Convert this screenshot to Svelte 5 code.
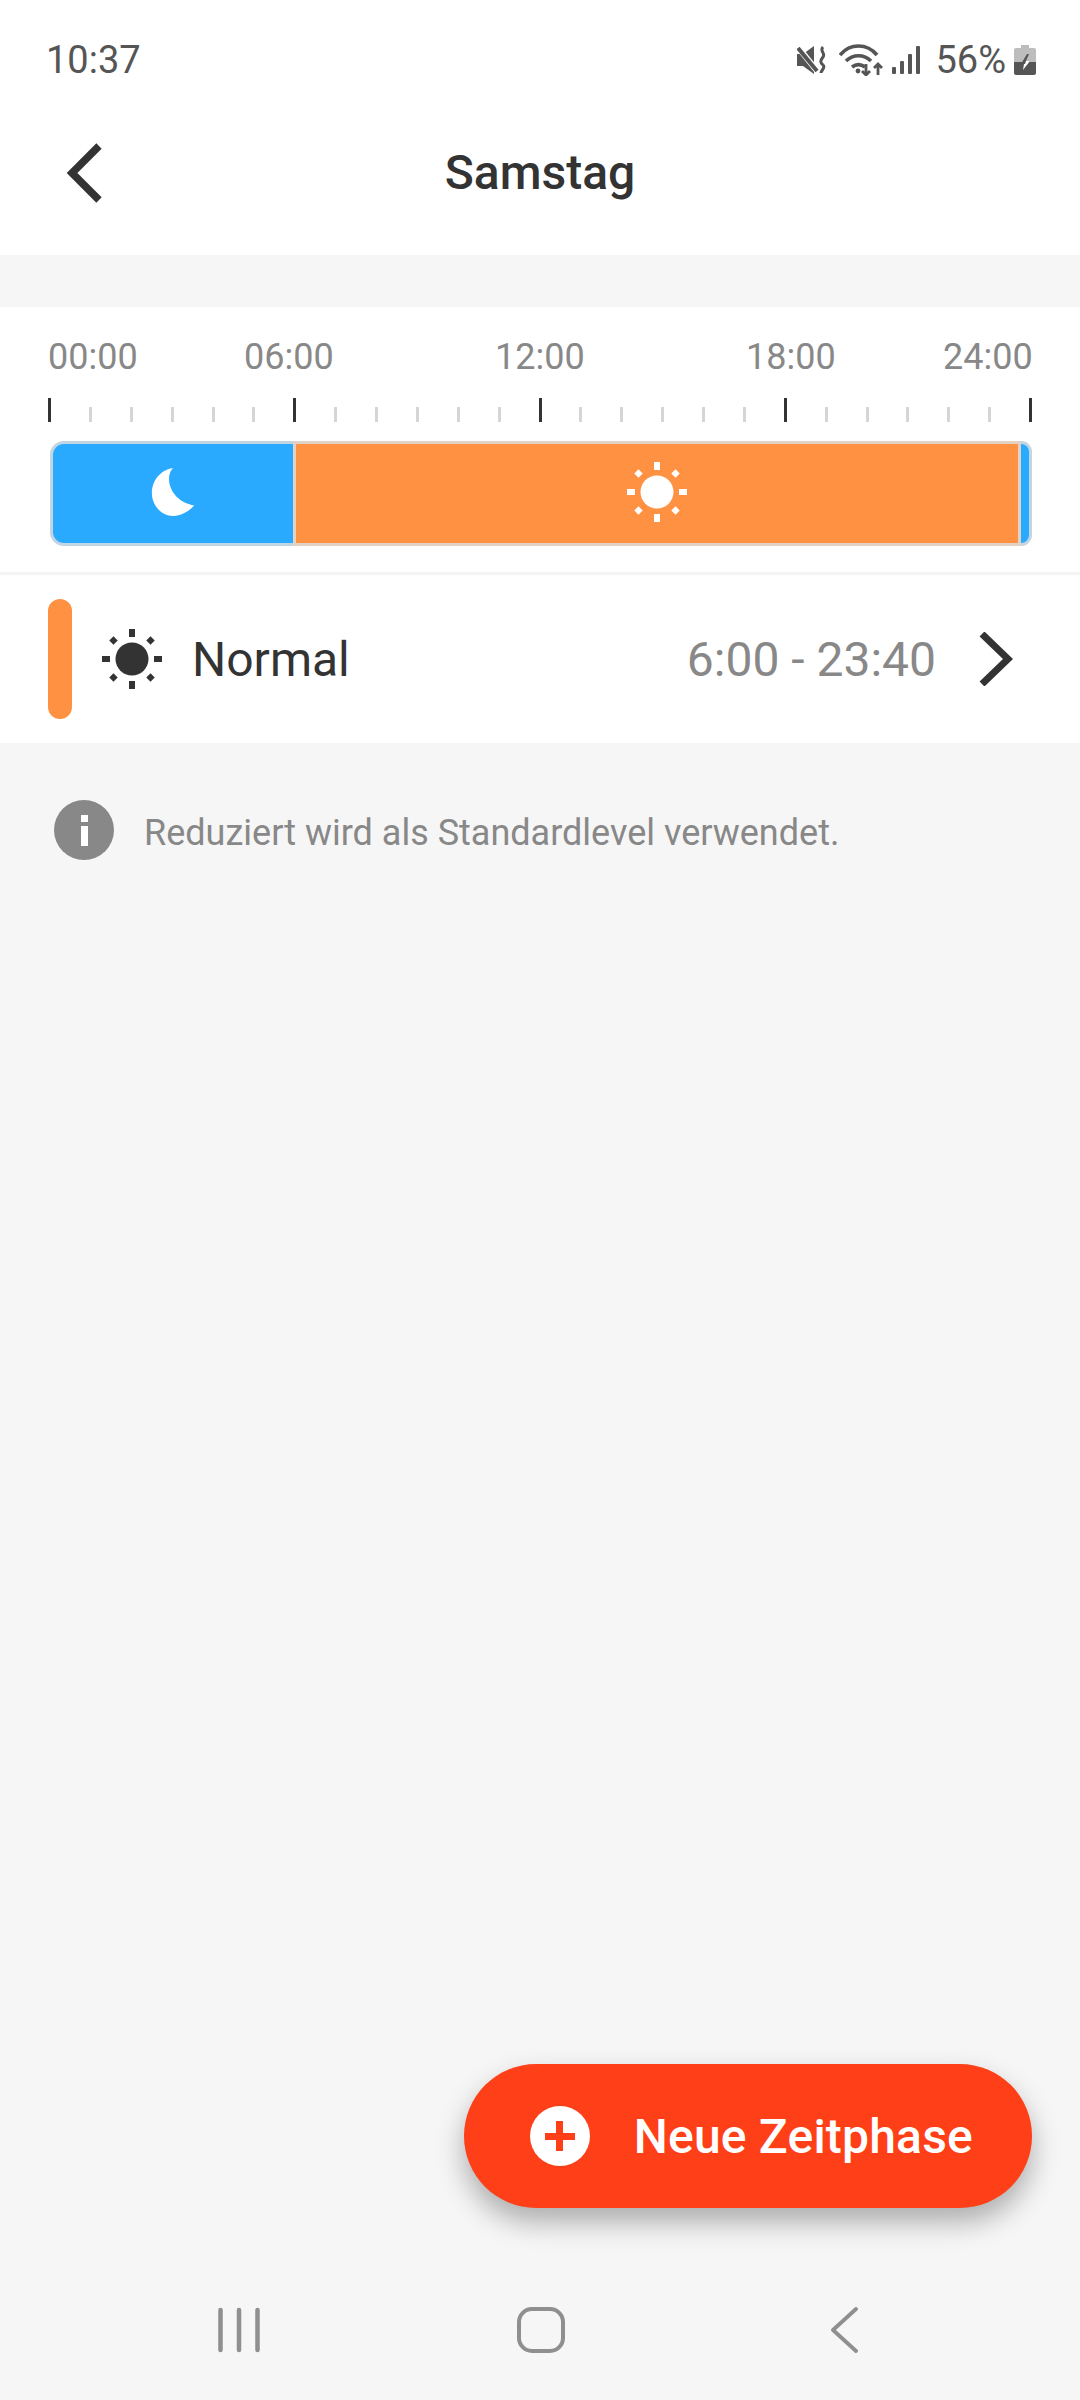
<script>
	const labels = ['00:00', '06:00', '12:00', '18:00', '24:00'];
	const ticks = Array.from({ length: 25 }, (_, i) => i % 6 === 0);
	const rays = [0, 45, 90, 135, 180, 225, 270, 315];
</script>

{#snippet sun(color)}
	<svg class="sun" viewBox="0 0 60 60" fill={color}>
		<circle cx="30" cy="30" r="16.5" />
		{#each rays as angle}
			{#if angle % 90 === 0}
				<rect x="27" y="0" width="6" height="8" transform="rotate({angle} 30 30)" />
			{:else}
				<rect x="27" y="0.8" width="6" height="6" transform="rotate({angle} 30 30)" />
			{/if}
		{/each}
	</svg>
{/snippet}

<div class="page">
	<header class="top">
		<div class="status">
			<span class="clock">10:37</span>
			<div class="status-icons">
				<svg class="ic-mute" viewBox="0 0 30 28" fill="#555">
					<path d="M0 8h6L17 0v28L6 20H0z" />
					<path d="M0 0l21 26" stroke="#fff" stroke-width="6" />
					<path d="M1 2l19 23" stroke="#555" stroke-width="4" />
					<path d="M26 1c-4 4 3 6 0 10s-3 5 0 8-2 5-2 8" fill="none" stroke="#555" stroke-width="3" />
				</svg>
				<svg class="ic-wifi" viewBox="0 0 44 32" fill="none" stroke="#555" stroke-width="3.6">
					<path d="M1 11c10-12 27-12 37 0" />
					<path d="M7 17c7-7 18-7 25 0" />
					<path d="M13 23c4-3 9-3 13 0" />
					<circle cx="19" cy="27" r="2.4" fill="#555" stroke="none" />
					<path d="M27 20v11M23 27l4 4 4-4" stroke-width="2.8" />
					<path d="M39 31V20M35 24l4-4 4 4" stroke-width="2.8" />
				</svg>
				<svg class="ic-signal" viewBox="0 0 28 28" fill="#555">
					<rect x="0" y="21" width="4" height="7" rx="1" />
					<rect x="8" y="15" width="4" height="13" rx="1" />
					<rect x="16" y="8" width="4" height="20" rx="1" />
					<rect x="24" y="0" width="4" height="28" rx="1" />
				</svg>
				<span class="percent">56%</span>
				<svg class="ic-battery" viewBox="0 0 22 30">
					<path d="M7 0h8v3h5a2 2 0 0 1 2 2v12H0V5a2 2 0 0 1 2-2h5z" fill="#bdbdbd" />
					<path d="M0 17h22v11a2 2 0 0 1-2 2H2a2 2 0 0 1-2-2z" fill="#555" />
					<path d="M13 9l-6 10h4l-2 6 7-9h-4l3-7z" fill="#555" />
					<path d="M10 19l-1 6 7-9h-4l-1 3z" fill="#fff" />
				</svg>
			</div>
		</div>
		<div class="title-bar">
			<svg class="back" viewBox="0 0 36 60" fill="none" stroke="#333" stroke-width="7.5">
				<path d="M33 3L6 30l27 27" />
			</svg>
			<h1>Samstag</h1>
		</div>
	</header>

	<main class="content">
		<section class="timeline">
			<div class="axis-labels">
				{#each labels as label}
					<span>{label}</span>
				{/each}
			</div>
			<div class="ticks">
				{#each ticks as major}
					<i class:major></i>
				{/each}
			</div>
			<div class="bar">
				<div class="seg seg-night">
					<svg class="moon" viewBox="0 0 44 50" fill="#fff">
						<path d="M22 0C13 9 18 34 44 39 37 47 28 50 22 50 10 50 0 39 0 26 0 13 9 2 22 0z" />
					</svg>
				</div>
				<div class="seg seg-day">{@render sun('#fff')}</div>
				<div class="seg seg-end"></div>
			</div>
		</section>

		<section class="phase">
			<span class="pill"></span>
			{@render sun('#333')}
			<span class="phase-name">Normal</span>
			<span class="phase-time">6:00 - 23:40</span>
			<svg class="more" viewBox="0 0 34 54" fill="none" stroke="#333" stroke-width="7">
				<path d="M3 2l26 25L3 52" />
			</svg>
		</section>

		<div class="info">
			<span class="info-icon"><b></b><b></b></span>
			<span class="info-text">Reduziert wird als Standardlevel verwendet.</span>
		</div>

		<button class="add">
			<span class="plus"></span>
			Neue Zeitphase
		</button>
	</main>

	<nav class="nav">
		<svg class="nav-recent" viewBox="0 0 42 46" fill="none" stroke="#8f8f8f" stroke-width="4.5" stroke-linecap="round">
			<path d="M2.5 3v40M21 3v40M39.5 3v40" />
		</svg>
		<svg class="nav-home" viewBox="0 0 48 46" fill="none" stroke="#8f8f8f" stroke-width="4">
			<rect x="2" y="2" width="44" height="42" rx="13" />
		</svg>
		<svg class="nav-back" viewBox="0 0 28 46" fill="none" stroke="#8f8f8f" stroke-width="3.8" stroke-linecap="round" stroke-linejoin="round">
			<path d="M26 2L3 23l23 21" />
		</svg>
	</nav>
</div>

<style>
	:global(body) {
		margin: 0;
		font-family: Roboto, 'Liberation Sans', sans-serif;
	}

	.page {
		display: flex;
		flex-direction: column;
		height: 2400px;
		background: #f6f6f6;
		overflow: hidden;
	}

	.top {
		height: 255px;
		background: #fff;
	}

	.status {
		display: flex;
		align-items: center;
		justify-content: space-between;
		height: 60px;
		padding: 30px 44px 0 46px;
		color: #555;
		font-size: 38px;
	}

	.status-icons {
		display: flex;
		align-items: center;
	}

	.ic-mute {
		width: 30px;
		height: 28px;
		margin-right: 12px;
	}

	.ic-wifi {
		width: 44px;
		height: 32px;
		margin-right: 9px;
	}

	.ic-signal {
		width: 28px;
		height: 28px;
		margin-right: 15px;
	}

	.percent {
		margin-right: 8px;
	}

	.ic-battery {
		width: 22px;
		height: 30px;
	}

	.title-bar {
		position: relative;
		display: flex;
		align-items: center;
		justify-content: center;
		height: 85px;
		margin-top: 40px;
	}

	.back {
		position: absolute;
		left: 66px;
		width: 36px;
		height: 60px;
	}

	h1 {
		margin: 0;
		color: #333;
		font-size: 48px;
		font-weight: 500;
	}

	.content {
		position: relative;
		flex: 1;
		padding-top: 52px;
	}

	.timeline {
		height: 268px;
		padding: 30px 48px 0;
		box-sizing: border-box;
		background: #fff;
		border-bottom: 3px solid #f4f4f4;
	}

	.axis-labels {
		display: grid;
		grid-template-columns: 196px 251px 251px 197px auto;
		color: #888;
		font-size: 36px;
		line-height: 40px;
	}

	.ticks {
		display: flex;
		align-items: flex-end;
		justify-content: space-between;
		height: 24px;
		margin-top: 21px;
	}

	.ticks i {
		width: 3px;
		height: 15px;
		background: #d5d5d5;
	}

	.ticks i.major {
		height: 24px;
		background: #333;
	}

	.bar {
		display: flex;
		height: 105px;
		margin: 19px 0 0 2px;
	}

	.seg {
		display: flex;
		align-items: center;
		justify-content: center;
		box-sizing: border-box;
		padding-bottom: 4px;
		border: 3px solid rgb(221 221 221 / 85%);
	}

	.seg-night {
		width: 243px;
		background: #29aaff;
		border-right-width: 0;
		border-radius: 14px 0 0 14px;
	}

	.seg-day {
		flex: 1;
		background: #ff9142;
	}

	.seg-end {
		width: 11px;
		background: #29aaff;
		border-left-width: 0;
		border-radius: 0 14px 14px 0;
	}

	.moon {
		width: 44px;
		height: 48px;
	}

	.sun {
		width: 60px;
		height: 60px;
	}

	.phase {
		display: flex;
		align-items: center;
		height: 168px;
		padding: 0 67px 0 48px;
		background: #fff;
	}

	.pill {
		width: 24px;
		height: 120px;
		border-radius: 12px;
		background: #ff9142;
	}

	.phase .sun {
		margin-left: 30px;
	}

	.phase-name {
		margin-left: 30px;
		color: #333;
		font-size: 48px;
	}

	.phase-time {
		margin-left: auto;
		color: #888;
		font-size: 48px;
	}

	.more {
		width: 34px;
		height: 54px;
		margin-left: 43px;
	}

	.info {
		display: flex;
		align-items: flex-start;
		gap: 30px;
		padding: 57px 0 0 54px;
		color: #888;
		font-size: 36px;
		line-height: 60px;
	}

	.info-text {
		padding-top: 3px;
	}

	.info-icon {
		display: flex;
		flex-direction: column;
		align-items: center;
		justify-content: center;
		gap: 4px;
		width: 60px;
		height: 60px;
		border-radius: 50%;
		background: #888;
	}

	.info-icon b {
		width: 7px;
		height: 7px;
		background: #fff;
	}

	.info-icon b + b {
		height: 20px;
	}

	.add {
		position: absolute;
		right: 48px;
		bottom: 48px;
		display: flex;
		align-items: center;
		gap: 44px;
		height: 144px;
		padding: 0 59px 0 66px;
		border: 0;
		border-radius: 72px;
		background: #ff3f17;
		box-shadow: 0 14px 28px rgb(0 0 0 / 30%);
		color: #fff;
		font: 500 48px Roboto, sans-serif;
		letter-spacing: 0.2px;
	}

	.plus {
		position: relative;
		width: 60px;
		height: 60px;
		border-radius: 50%;
		background: #fff;
	}

	.plus::before,
	.plus::after {
		content: '';
		position: absolute;
		background: #ff3f17;
	}

	.plus::before {
		top: 26.5px;
		left: 15px;
		width: 30px;
		height: 7px;
	}

	.plus::after {
		top: 15px;
		left: 26.5px;
		width: 7px;
		height: 30px;
	}

	.nav {
		display: grid;
		grid-template-columns: repeat(3, 1fr);
		align-items: center;
		justify-items: center;
		height: 144px;
		padding: 3px 85px 0 88px;
		box-sizing: border-box;
	}

	.nav-recent {
		width: 42px;
		height: 46px;
	}

	.nav-home {
		width: 48px;
		height: 46px;
	}

	.nav-back {
		width: 28px;
		height: 46px;
	}
</style>
